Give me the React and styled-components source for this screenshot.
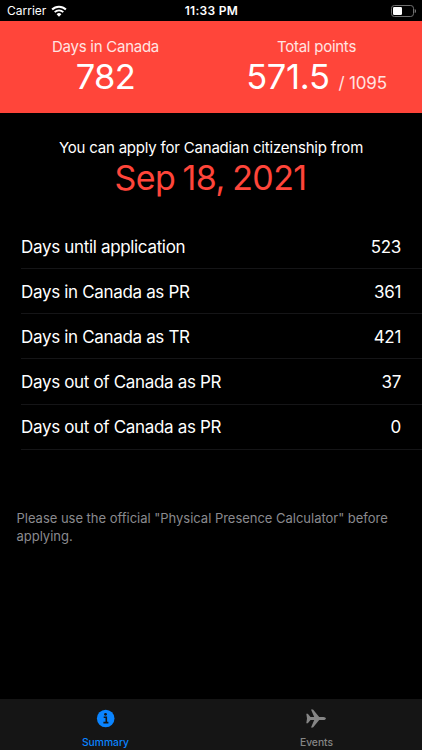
import React from "react";
import styled, { createGlobalStyle } from "styled-components";

const GlobalStyle = createGlobalStyle`
  * { box-sizing: border-box; }
  body { margin: 0; background: #000; }
`;

const Screen = styled.div`
  width: 422px;
  height: 750px;
  display: flex;
  flex-direction: column;
  overflow: hidden;
  background: #000;
  color: #fff;
  font-family: Inter, "Liberation Sans", sans-serif;
  white-space: nowrap;
`;

const StatusBar = styled.header`
  height: 21px;
  padding: 0 6px 0 7px;
  display: grid;
  grid-template-columns: 1fr auto 1fr;
  align-items: center;
  font-size: 12px;
  line-height: 22px;
`;

const Carrier = styled.div`
  display: flex;
  align-items: center;
  gap: 5px;
  letter-spacing: 0;
`;

const Clock = styled.div`
  font-weight: 600;
  letter-spacing: 0.3px;
`;

const Power = styled.div`
  display: flex;
  justify-content: flex-end;
`;

const Banner = styled.section`
  height: 92px;
  padding-top: 15px;
  display: grid;
  grid-template-columns: 1fr 1fr;
  background: #ff453a;
`;

const Stat = styled.div`
  display: flex;
  flex-direction: column;
  align-items: center;
`;

const StatLabel = styled.div`
  font-size: 15px;
  line-height: 21px;
  letter-spacing: -0.25px;
  color: #ffe4e2;
`;

const StatValue = styled.div`
  font-size: 34.5px;
  line-height: 40px;
  letter-spacing: ${(p) => p.$spacing};
`;

const StatTotal = styled.span`
  margin-left: 9px;
  font-size: 17px;
  letter-spacing: -0.2px;
  color: #ffe4e2;
`;

const Forecast = styled.section`
  padding-top: 25px;
  text-align: center;
`;

const ForecastLabel = styled.div`
  font-size: 15px;
  line-height: 20px;
  letter-spacing: -0.2px;
`;

const ForecastDate = styled.div`
  padding-right: 1px;
  font-size: 34px;
  line-height: 40px;
  letter-spacing: -0.6px;
  word-spacing: -1.5px;
  color: #ff453a;
`;

const Rows = styled.dl`
  margin: 26px 0 0 21px;
`;

const Row = styled.div`
  height: 45.15px;
  padding-right: 21px;
  display: flex;
  justify-content: space-between;
  border-bottom: 1px solid #151517;
  font-size: 17px;
  line-height: 46px;
  letter-spacing: -0.33px;

  &:last-child {
    line-height: 45px;
  }
`;

const Name = styled.dt`
  margin: 0;
`;

const Amount = styled.dd`
  margin: 0;
`;

const Note = styled.p`
  width: 390px;
  margin: 59px 0 0 16.5px;
  font-size: 13px;
  line-height: 18.5px;
  letter-spacing: -0.02px;
  white-space: normal;
  color: #8a8a8e;
`;

const TabBar = styled.nav`
  height: 51px;
  margin-top: auto;
  display: grid;
  grid-template-columns: 1fr 1fr;
  background: #151515;
`;

const Tab = styled.div`
  display: flex;
  flex-direction: column;
  align-items: center;
  padding-top: 10px;
  gap: 6px;
  font-size: 10.3px;
  line-height: 14px;
  font-weight: 500;
  letter-spacing: 0;
  color: ${(p) => (p.$active ? "#0a84ff" : "#858585")};
`;

const WifiIcon = () => (
  <svg width="16" height="12" viewBox="0 0 16 12" fill="none" stroke="#fff">
    <path d="M1.1 4.5a9.8 9.8 0 0 1 13.8 0" strokeWidth="2" />
    <path d="M3.7 7.1a6.1 6.1 0 0 1 8.6 0" strokeWidth="1.9" />
    <path d="M8 11.7 5.6 9.2a3.4 3.4 0 0 1 4.8 0Z" fill="#fff" stroke="none" />
  </svg>
);

const BatteryIcon = () => (
  <svg width="25" height="12" viewBox="0 0 25 12">
    <rect x="0.5" y="0.5" width="22" height="11" rx="2.8" fill="none" stroke="#707070" />
    <rect x="2" y="2" width="9" height="8" rx="1.2" fill="#fff" />
    <path d="M23.7 4v4a2.1 2.1 0 0 0 0-4Z" fill="#707070" />
  </svg>
);

const InfoIcon = () => (
  <svg width="20" height="20" viewBox="0 0 20 20">
    <circle cx="9.7" cy="9.5" r="8.8" fill="#0a84ff" />
    <circle cx="9.5" cy="5.3" r="1.4" fill="#151515" />
    <path d="M7.7 8.2h2.6v5.2M7.4 13.6h5" fill="none" stroke="#151515" strokeWidth="1.6" />
  </svg>
);

const PlaneIcon = () => (
  <svg width="22" height="20" viewBox="0 0 22 20" fill="#858585">
    <path d="M0.3 4.8h1.5l2.7 3.1h3.7L5 0.4h2l6.2 7.5h4c1.8 0 2.7.8 2.7 1.6s-.9 1.6-2.7 1.6h-4L7 18.6H5l3.2-7.5H4.5l-2.7 3.1H.3l.7-4.7Z" />
  </svg>
);

const rows = [
  ["Days until application", 523],
  ["Days in Canada as PR", 361],
  ["Days in Canada as TR", 421],
  ["Days out of Canada as PR", 37],
  ["Days out of Canada as PR", 0],
];

export default function App() {
  return (
    <>
      <GlobalStyle />
      <Screen>
        <StatusBar>
          <Carrier>
            Carrier
            <WifiIcon />
          </Carrier>
          <Clock>11:33 PM</Clock>
          <Power>
            <BatteryIcon />
          </Power>
        </StatusBar>
        <Banner>
          <Stat>
            <StatLabel>Days in Canada</StatLabel>
            <StatValue $spacing="-0.6px">782</StatValue>
          </Stat>
          <Stat>
            <StatLabel>Total points</StatLabel>
            <StatValue $spacing="-0.3px">
              571.5<StatTotal>/ 1095</StatTotal>
            </StatValue>
          </Stat>
        </Banner>
        <Forecast>
          <ForecastLabel>You can apply for Canadian citizenship from</ForecastLabel>
          <ForecastDate>Sep 18, 2021</ForecastDate>
        </Forecast>
        <Rows>
          {rows.map(([name, amount], i) => (
            <Row key={i}>
              <Name>{name}</Name>
              <Amount>{amount}</Amount>
            </Row>
          ))}
        </Rows>
        <Note>
          Please use the official "Physical Presence Calculator" before applying.
        </Note>
        <TabBar>
          <Tab $active>
            <InfoIcon />
            Summary
          </Tab>
          <Tab>
            <PlaneIcon />
            Events
          </Tab>
        </TabBar>
      </Screen>
    </>
  );
}
